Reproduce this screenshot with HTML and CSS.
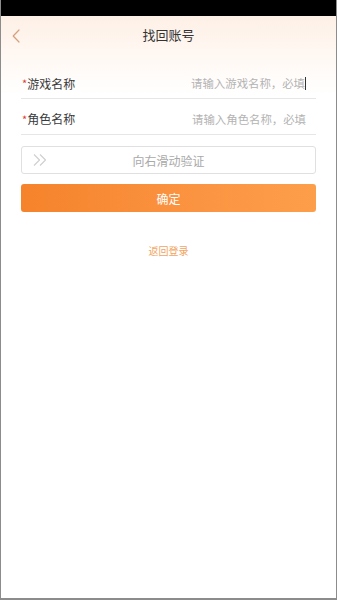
FILE: index.html
```html
<!DOCTYPE html>
<html lang="zh-CN">
<head>
<meta charset="utf-8">
<title>找回账号</title>
<link rel="stylesheet" href="styles.css">
</head>
<body>
<div class="screen">
  <div class="statusbar"></div>
  <div class="header">
    <span class="back">
      <svg width="8" height="14" viewBox="0 0 8 14"><path d="M7 1 L1.2 7 L7 13" fill="none" stroke="#d6a07c" stroke-width="1.2" stroke-linecap="round" stroke-linejoin="round"/></svg>
    </span>
    <div class="title">找回账号</div>
  </div>
  <div class="form">
    <div class="row row-first">
      <div class="label"><span class="star">*</span>游戏名称</div>
      <div class="ph">请输入游戏名称，必填<span class="caret"></span></div>
    </div>
    <div class="row">
      <div class="label"><span class="star">*</span>角色名称</div>
      <div class="ph">请输入角色名称，必填</div>
    </div>
    <div class="slider">
      <span class="arrows">
        <svg width="16" height="14" viewBox="0 0 16 14"><path d="M2 1.5 L7.5 7 L2 12.5 M8 1.5 L13.5 7 L8 12.5" fill="none" stroke="#cfcfcf" stroke-width="1.1" stroke-linejoin="round"/></svg>
      </span>
      <span class="slide-text">向右滑动验证</span>
    </div>
    <div class="btn">确定</div>
    <div class="link">返回登录</div>
  </div>
</div>
</body>
</html>
```
FILE: styles.css
```css
html, body {
  margin: 0;
  padding: 0;
  background: #fff;
}
body {
  font-family: "Noto Sans CJK SC", "Noto Sans", sans-serif;
}
.screen {
  box-sizing: border-box;
  width: 337px;
  height: 600px;
  border-left: 1px solid #8c8c8c;
  border-right: 1px solid #8c8c8c;
  border-bottom: 2px solid #8c8c8c;
  background: linear-gradient(180deg, #fdf0e6 16px, #fff7f1 50px, #ffffff 95px);
  overflow: hidden;
}
.statusbar {
  height: 16px;
  background: #000;
  margin: 0 -1px;
}
.header {
  height: 36px;
  display: flex;
  align-items: center;
  justify-content: center;
  position: relative;
}
.back {
  position: absolute;
  left: 11px;
  top: 13px;
  display: flex;
}
.title {
  font-size: 13px;
  color: #333;
  line-height: 1;
  margin-top: 1px;
}
.form {
  padding: 11px 20px 0 20px;
  display: flex;
  flex-direction: column;
}
.row {
  height: 36px;
  border-bottom: 1px solid #e6e6e6;
  display: flex;
  align-items: center;
  justify-content: space-between;
  box-sizing: border-box;
  padding-top: 4px;
}
.row-first {
  padding-top: 5px;
}
.label {
  font-size: 12px;
  color: #3a3a3a;
  padding-left: 1px;
  display: flex;
  align-items: center;
}
.star {
  color: #e03a2e;
  font-size: 11px;
  margin-right: 0px;
}
.ph {
  font-size: 11.4px;
  color: #b3b3b3;
  padding-right: 10px;
  display: flex;
  align-items: center;
}
.caret {
  display: inline-block;
  width: 1px;
  height: 13px;
  background: #333;
  margin-left: 0;
}
.slider {
  margin-top: 11px;
  height: 28px;
  box-sizing: border-box;
  border: 1px solid #e0e0e0;
  border-radius: 3px;
  background: #fff;
  display: flex;
  align-items: center;
  justify-content: center;
  position: relative;
}
.arrows {
  position: absolute;
  left: 10px;
  top: 6px;
  display: flex;
}
.slide-text {
  font-size: 12px;
  color: #a9a9a9;
}
.btn {
  margin-top: 10px;
  height: 28px;
  border-radius: 3px;
  background: linear-gradient(90deg, #f5832b 0%, #fb9442 60%, #fd9e4a 100%);
  color: #fff;
  font-size: 12px;
  display: flex;
  align-items: center;
  justify-content: center;
}
.link {
  margin-top: 32px;
  text-align: center;
  font-size: 10px;
  color: #f2a462;
  line-height: 14px;
}
```
